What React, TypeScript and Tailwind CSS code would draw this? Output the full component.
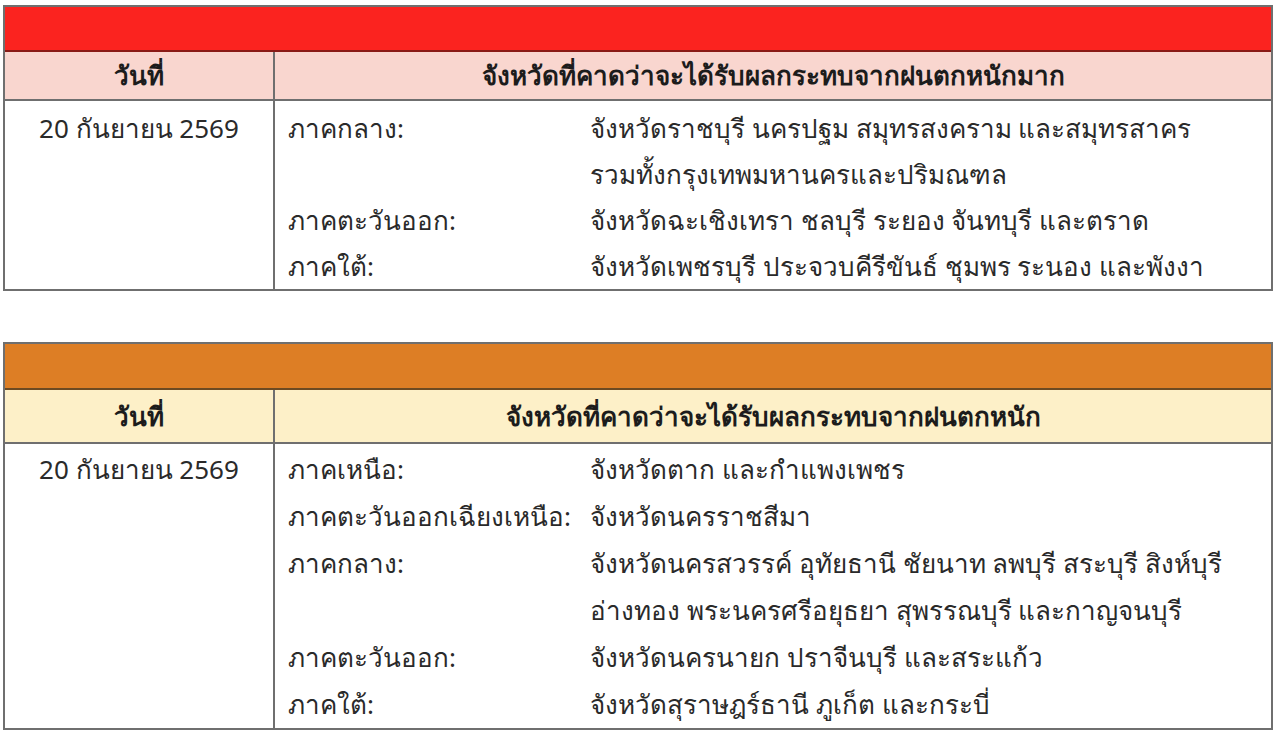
const rows1 = [
  {
    region: 'ภาคกลาง:',
    lines: ['จังหวัดราชบุรี นครปฐม สมุทรสงคราม และสมุทรสาคร', 'รวมทั้งกรุงเทพมหานครและปริมณฑล'],
  },
  { region: 'ภาคตะวันออก:', lines: ['จังหวัดฉะเชิงเทรา ชลบุรี ระยอง จันทบุรี และตราด'] },
  { region: 'ภาคใต้:', lines: ['จังหวัดเพชรบุรี ประจวบคีรีขันธ์ ชุมพร ระนอง และพังงา'] },
];

const rows2 = [
  { region: 'ภาคเหนือ:', lines: ['จังหวัดตาก และกำแพงเพชร'] },
  { region: 'ภาคตะวันออกเฉียงเหนือ:', lines: ['จังหวัดนครราชสีมา'] },
  {
    region: 'ภาคกลาง:',
    lines: ['จังหวัดนครสวรรค์ อุทัยธานี ชัยนาท ลพบุรี สระบุรี สิงห์บุรี', 'อ่างทอง พระนครศรีอยุธยา สุพรรณบุรี และกาญจนบุรี'],
  },
  { region: 'ภาคตะวันออก:', lines: ['จังหวัดนครนายก ปราจีนบุรี และสระแก้ว'] },
  { region: 'ภาคใต้:', lines: ['จังหวัดสุราษฎร์ธานี ภูเก็ต และกระบี่'] },
];

type Row = { region: string; lines: string[] };

// sizes differ a little between the two tables in the source image
function RainTable({
  bar,
  head,
  title,
  rows,
  body,
}: {
  bar: string;
  head: string;
  title: string;
  rows: Row[];
  body: string;
}) {
  return (
    <div className="border-2 border-[#6f6f6f]">
      <div className={`border-b-2 ${bar}`} />
      <div className={`flex border-b-2 border-[#6f6f6f] text-[26px] font-bold text-[#1c1c1c] ${head}`}>
        <div className="flex w-[270px] items-center justify-center border-r-2 border-[#6f6f6f]">วันที่</div>
        <div className="flex flex-1 items-center justify-center">{title}</div>
      </div>
      <div className="flex bg-white text-[26px]">
        <div className={`w-[270px] border-r-2 border-[#6f6f6f] text-center ${body}`}>20 กันยายน 2569</div>
        <div className={`flex-1 pl-[13px] ${body}`}>
          {rows.map((r) => (
            <div key={r.region} className="flex">
              <div className="w-[302px] shrink-0">{r.region}</div>
              <div>
                {r.lines.map((l) => (
                  <div key={l}>{l}</div>
                ))}
              </div>
            </div>
          ))}
        </div>
      </div>
    </div>
  );
}

export default function App() {
  return (
    <div
      className="flex h-[733px] w-[1280px] flex-col gap-[51px] bg-white pl-[3px] pr-[7px] pt-[5px] text-[#2a2a2a]"
      style={{ fontFamily: '"Noto Sans", Tahoma, "Liberation Sans", sans-serif' }}
    >
      <RainTable
        bar="h-[45px] bg-[#fb231f] border-[#8a1a16]"
        head="h-[49px] bg-[#f9d6cf]"
        title="จังหวัดที่คาดว่าจะได้รับผลกระทบจากฝนตกหนักมาก"
        rows={rows1}
        body="pt-[4px] leading-[46px]"
      />
      <RainTable
        bar="h-[46px] bg-[#dd7e25] border-[#6d4a22]"
        head="h-[54px] bg-[#fdf0c8]"
        title="จังหวัดที่คาดว่าจะได้รับผลกระทบจากฝนตกหนัก"
        rows={rows2}
        body="pt-[2px] leading-[47px]"
      />
    </div>
  );
}
